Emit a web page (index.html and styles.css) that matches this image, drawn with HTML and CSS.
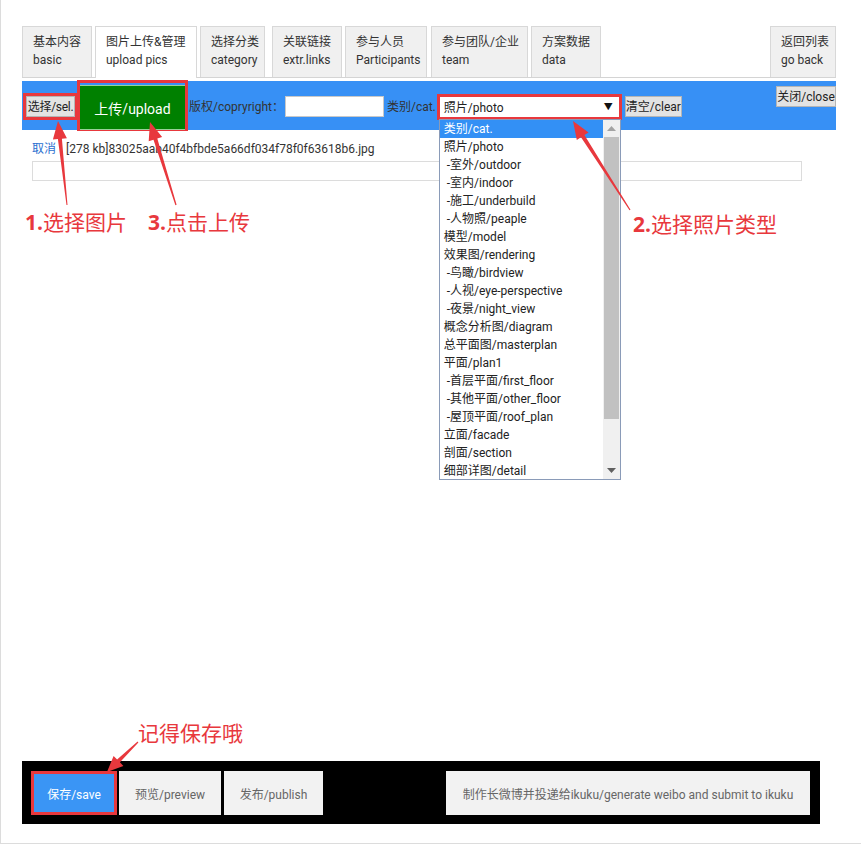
FILE: index.html
```html
<!DOCTYPE html>
<html>
<head>
<meta charset="utf-8">
<title>upload pics</title>
<link rel="stylesheet" href="styles.css">
</head>
<body>
<div class="frame">
  <div class="tabs">
    <div class="tab w-basic"><span>基本内容</span><span>basic</span></div>
    <div class="tab active w-pics"><span>图片上传&amp;管理</span><span>upload pics</span></div>
    <div class="tab w-cat"><span>选择分类</span><span>category</span></div>
    <div class="tab w-links"><span>关联链接</span><span>extr.links</span></div>
    <div class="tab w-part"><span>参与人员</span><span>Participants</span></div>
    <div class="tab w-team"><span>参与团队/企业</span><span>team</span></div>
    <div class="tab w-data"><span>方案数据</span><span>data</span></div>
    <div class="tab back"><span>返回列表</span><span>go back</span></div>
  </div>

  <div class="toolbar">
    <div class="mark sel-mark"><button class="btn sel">选择/sel.</button></div>
    <div class="mark upload-mark"><div class="upload">上传/upload</div></div>
    <span class="label">版权/copryright：</span>
    <div class="field"></div>
    <span class="label cat">类别/cat.</span>
    <div class="mark select-mark">
      <div class="select"><span>照片/photo</span><span class="caret">▼</span></div>
      <div class="dropdown">
        <ul class="options">
          <li class="on">类别/cat.</li>
          <li>照片/photo</li>
          <li> -室外/outdoor</li>
          <li> -室内/indoor</li>
          <li> -施工/underbuild</li>
          <li> -人物照/peaple</li>
          <li>模型/model</li>
          <li>效果图/rendering</li>
          <li> -鸟瞰/birdview</li>
          <li> -人视/eye-perspective</li>
          <li> -夜景/night_view</li>
          <li>概念分析图/diagram</li>
          <li>总平面图/masterplan</li>
          <li>平面/plan1</li>
          <li> -首层平面/first_floor</li>
          <li> -其他平面/other_floor</li>
          <li> -屋顶平面/roof_plan</li>
          <li>立面/facade</li>
          <li>剖面/section</li>
          <li>细部详图/detail</li>
        </ul>
        <div class="scrollbar">
          <div class="sb-btn"><svg width="9" height="5" viewBox="0 0 9 5"><path d="M0 5 L4.5 0 L9 5 Z" fill="#a3a3a3"/></svg></div>
          <div class="sb-track"><div class="sb-thumb"></div></div>
          <div class="sb-btn"><svg width="9" height="5" viewBox="0 0 9 5"><path d="M0 0 L4.5 5 L9 0 Z" fill="#606060"/></svg></div>
        </div>
      </div>
    </div>
    <button class="btn clear">清空/clear</button>
    <button class="btn close">关闭/close</button>
  </div>

  <div class="file-row"><a class="cancel">取消</a><span class="fname">[278 kb]83025aab40f4bfbde5a66df034f78f0f63618b6.jpg</span></div>
  <div class="progress"></div>

  <div class="footer">
    <div class="save">保存/save</div>
    <div class="fbtn preview">预览/preview</div>
    <div class="fbtn publish">发布/publish</div>
    <div class="fbtn generate">制作长微博并投递给ikuku/generate weibo and submit to ikuku</div>
  </div>
</div>

<svg class="arrows" width="861" height="845" viewBox="0 0 861 845">
  <polygon points="58,121 66.9,138.2 61.9,138.7 67.5,205 66.5,205 57.9,139.1 52.9,139.6" />
  <polygon points="150,122 162.1,137.1 157.3,138.6 176.6,204.8 175.4,205.2 153.5,139.8 148.7,141.3" />
  <polygon points="573,121 588.6,132.4 584.4,135.1 630.5,209.7 629.5,210.3 581,137.3 576.8,140" />
  <polygon points="107,772 123.4,765.9 119.9,762.3 138.4,742.4 137.6,741.6 117.1,759.5 113.6,755.9" />
</svg>
<div class="note n1"><b>1.</b>选择图片</div>
<div class="note n3"><b>3.</b>点击上传</div>
<div class="note n2"><b>2.</b>选择照片类型</div>
<div class="note n4">记得保存哦</div>
</body>
</html>
```

FILE: styles.css
```css
* { box-sizing: border-box; }
html, body { margin: 0; padding: 0; background: #fff; }
body {
  position: relative;
  width: 861px;
  height: 845px;
  overflow: hidden;
  font-family: Roboto, "Noto Sans CJK SC", sans-serif;
  font-size: 12px;
  color: #333;
}
.frame {
  height: 844px;
  border-left: 1px solid #dcdcdc;
  border-bottom: 1px solid #dcdcdc;
  padding: 26px 25px 0 21px;
  display: flex;
  flex-direction: column;
}

/* tabs */
.tabs {
  display: flex;
  height: 52px;
  border-bottom: 1px solid #d4d4d4;
}
.tab {
  display: flex;
  flex-direction: column;
  height: 51px;
  padding: 6px 0 0 10px;
  margin-right: 3px;
  background: #f0f0f0;
  border: 1px solid #d8d8d8;
  border-bottom: none;
  line-height: 18px;
  color: #333;
  white-space: nowrap;
  overflow: hidden;
}
.tab.active {
  background: #fff;
  height: 52px;
  margin-bottom: -1px;
}
.w-basic { width: 70px; }
.w-pics { width: 102px; }
.w-cat { width: 65px; margin-right: 7px; }
.w-links { width: 70px; }
.w-part { width: 82px; margin-right: 4px; }
.w-team { width: 97px; }
.w-data { width: 70px; }
.tab.back { width: 66px; margin-left: auto; margin-right: 0; }

/* toolbar */
.toolbar {
  margin-top: 3px;
  height: 49px;
  background: #3790f5;
  display: flex;
  align-items: center;
  padding-left: 1px;
  position: relative;
}
.mark { border: 3px solid #e8383d; }
.btn {
  font-family: inherit;
  font-size: 12px;
  color: #222;
  background: #e3e3e3;
  border: 1px solid #b5b5b5;
  height: 21px;
  line-height: 18px;
  padding: 0;
  margin: 0;
  border-radius: 0;
  text-align: center;
  white-space: nowrap;
}
.sel-mark { margin-top: 2px; }
.btn.sel { display: block; width: 49px; height: 21px; letter-spacing: -0.3px; }
.upload-mark {
  width: 111px;
  height: 51px;
  margin: -1px 0 0 -1px;
  align-self: flex-start;
}
.upload {
  height: 45px;
  background: #008000;
  border-top: 1px solid #9ad09a;
  border-bottom: 1px solid #9ad09a;
  margin-top: 2px;
  color: #fff;
  font-size: 14px;
  display: flex;
  align-items: center;
  justify-content: center;
}
.label { margin-left: 1px; white-space: nowrap; color: #333; }
.field {
  width: 99px;
  height: 21px;
  background: #fff;
  border: 1px solid #c8c8c8;
  margin: 2px 0 0 1px;
}
.label.cat { margin-left: 3px; }
.select-mark {
  position: relative;
  width: 185px;
  height: 26px;
  margin-left: 1px;
  margin-top: 2px;
}
.select {
  height: 20px;
  background: #fff;
  display: flex;
  align-items: center;
  justify-content: space-between;
  padding: 0 6px 0 4px;
  color: #222;
}
.caret { font-size: 9px; color: #111; }
.clear { width: 57px; margin-left: 3px; margin-top: 2px; }
.close {
  width: 60px;
  margin-left: auto;
  align-self: flex-start;
  margin-top: 5px;
}

/* dropdown popup */
.dropdown {
  position: absolute;
  left: -1px;
  top: 22px;
  width: 182px;
  height: 361px;
  background: #fff;
  border: 1px solid #8a9bb8;
  display: flex;
  z-index: 5;
}
.options {
  list-style: none;
  margin: 0;
  padding: 0;
  flex: 1;
}
.options li {
  height: 18px;
  line-height: 18px;
  padding-left: 4px;
  white-space: pre;
  color: #222;
}
.options li.on { background: #3390f5; color: #fff; }
.scrollbar {
  width: 17px;
  background: #f0f0f0;
  display: flex;
  flex-direction: column;
}
.sb-btn {
  height: 17px;
  display: flex;
  align-items: center;
  justify-content: center;
}
.sb-track { flex: 1; padding: 0 1px; }
.sb-thumb { height: 282px; background: #c1c1c1; }

/* file row */
.file-row {
  margin-top: 11px;
  padding-left: 10px;
  line-height: 16px;
  white-space: nowrap;
}
.cancel { color: #2a6fcf; text-decoration: none; }
.fname { margin-left: 10px; color: #333; }
.progress {
  margin: 4px 0 0 10px;
  width: 770px;
  height: 20px;
  border: 1px solid #dcdcdc;
}

/* footer */
.footer {
  margin-top: auto;
  margin-bottom: 19px;
  width: 798px;
  height: 63px;
  background: #000;
  display: flex;
  align-items: flex-start;
  padding: 10px 10px 0 9px;
}
.save, .fbtn {
  height: 44px;
  display: flex;
  align-items: center;
  justify-content: center;
  white-space: nowrap;
}
.save {
  width: 86px;
  background: #3a95f5;
  color: #fff;
  border: 3px solid #e8383d;
}
.fbtn { background: #f2f2f2; color: #666; }
.preview { width: 102px; margin-left: 2px; }
.publish { width: 99px; margin-left: 3px; }
.generate { width: 364px; margin-left: auto; }

/* annotations */
.arrows {
  position: absolute;
  left: 0;
  top: 0;
  z-index: 10;
  pointer-events: none;
}
.arrows polygon { fill: #e8383d; }
.note {
  position: absolute;
  z-index: 10;
  color: #e8383d;
  font-family: "Noto Sans CJK SC", sans-serif;
  font-size: 21px;
  line-height: 24px;
  white-space: nowrap;
}
.note b { font-family: "Open Sans", sans-serif; font-weight: 700; }
.n1 { left: 25px; top: 209px; }
.n3 { left: 148px; top: 209px; }
.n2 { left: 633px; top: 211px; }
.n4 { left: 138px; top: 720px; }
```
